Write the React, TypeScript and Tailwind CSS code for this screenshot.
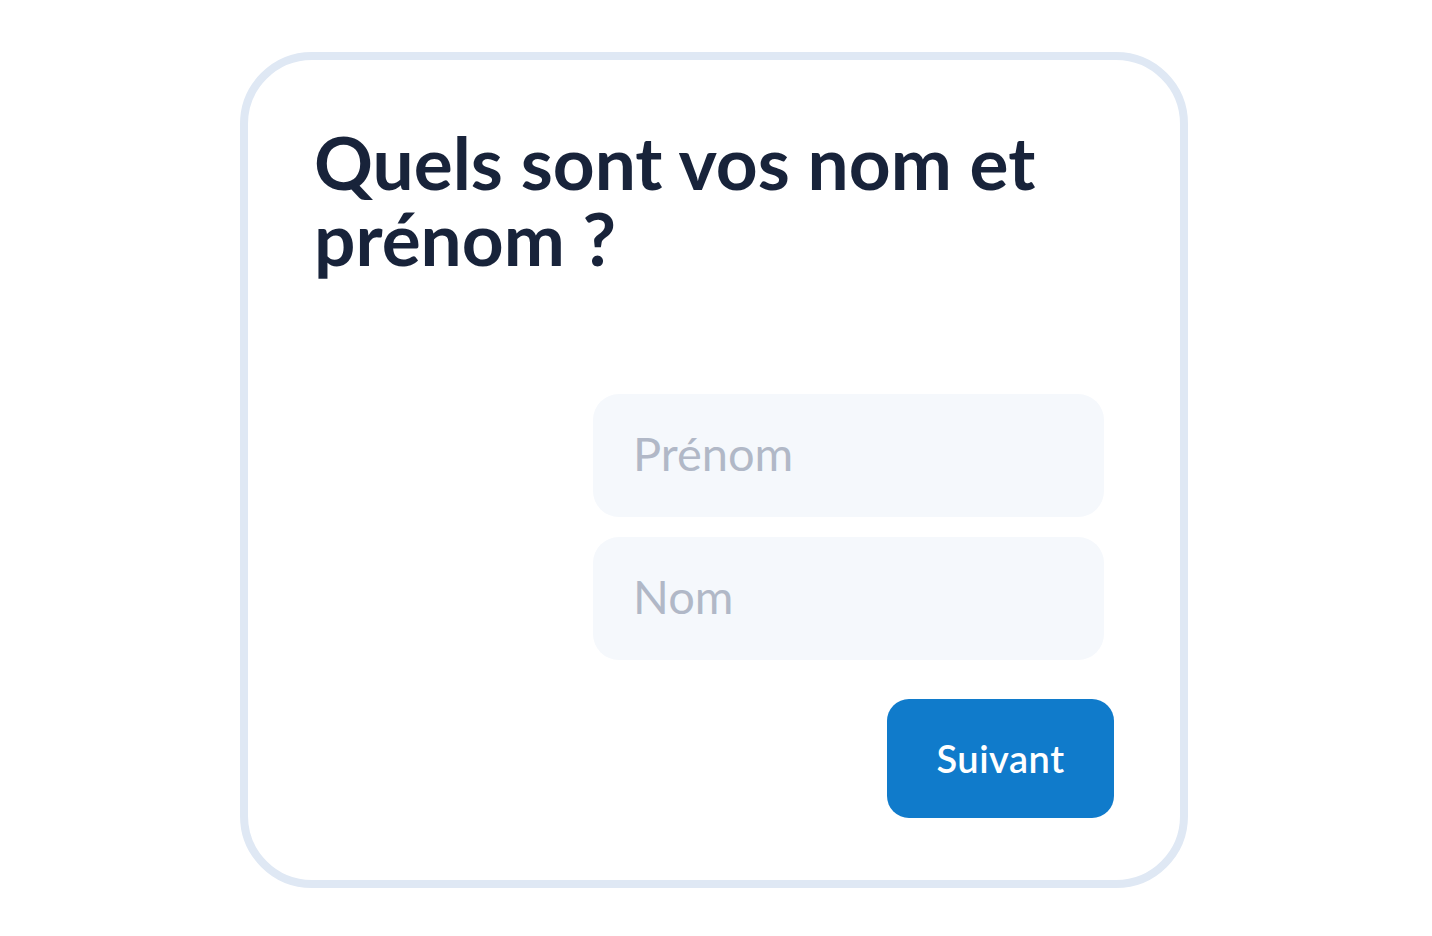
import React from 'react';

export default function App() {
  return (
    <div className="min-h-[936px] w-full bg-white flex pl-[240px] pt-[52px]" style={{ fontFamily: 'Lato, "Noto Sans", sans-serif' }}>
      <div className="w-[948px] h-[836px] rounded-[72px] border-[8px] border-[#dfe8f4] bg-white pl-[66px] pr-[66px] pt-[64px] flex flex-col">
        {/* Title */}
        <h1 className="text-[73px] leading-[76px] font-bold text-[#18233a]">
          Quels sont vos nom et
          <br />
          prénom ?
        </h1>

        {/* Fields */}
        <div className="mt-[118px] flex flex-col items-end gap-[20px]">
          <input
            type="text"
            placeholder="Prénom"
            className="w-[511px] h-[123px] mr-[10px] rounded-[26px] bg-[#f5f8fc] px-[40px] pb-[6px] text-[47px] font-normal text-[#18233a] placeholder:text-[#b1b8c7] outline-none"
          />
          <input
            type="text"
            placeholder="Nom"
            className="w-[511px] h-[123px] mr-[10px] rounded-[26px] bg-[#f5f8fc] px-[40px] pb-[6px] text-[47px] font-normal text-[#18233a] placeholder:text-[#b1b8c7] outline-none"
          />
          <button className="mt-[19px] w-[227px] h-[119px] rounded-[22px] bg-[#107bcb] text-white text-[38px] tracking-[0.5px] font-semibold">
            Suivant
          </button>
        </div>
      </div>
    </div>
  );
}
